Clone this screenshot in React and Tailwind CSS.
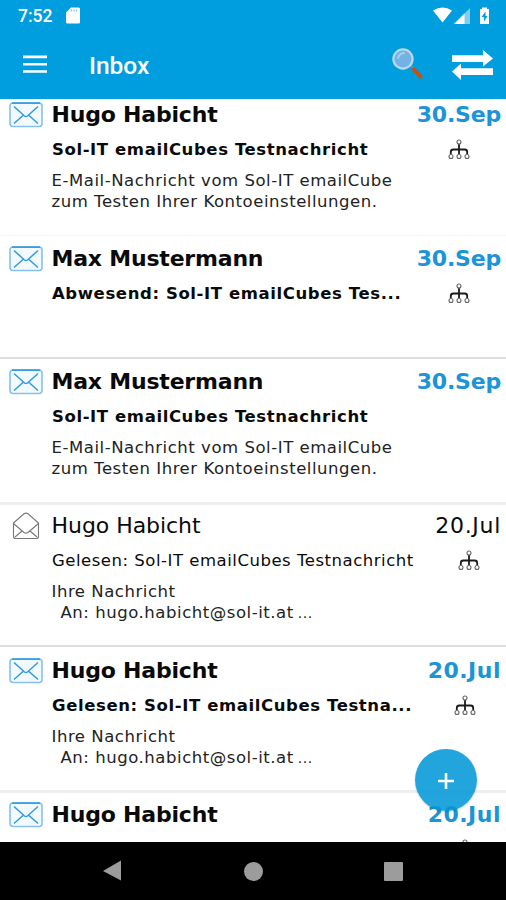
const body = ["E-Mail-Nachricht vom Sol-IT emailCube", "zum Testen Ihrer Kontoeinstellungen."];

const mails = [
  { from: "Hugo Habicht", date: "30.Sep", subject: "Sol-IT emailCubes Testnachricht", body, tree: true, unread: true, box: "h-[136px] pt-[2px]" },
  { from: "Max Mustermann", date: "30.Sep", subject: "Abwesend: Sol-IT emailCubes Tes...", tree: true, unread: true, box: "h-[122px] border-t border-[#f5f5f5] pt-[9px]" },
  { from: "Max Mustermann", date: "30.Sep", subject: "Sol-IT emailCubes Testnachricht", body, unread: true, box: "h-[145px] border-t-2 border-[#dedede] pt-[9px]" },
  { from: "Hugo Habicht", date: "20.Jul", subject: "Gelesen: Sol-IT emailCubes Testnachricht", reply: true, tree: true, july: true, box: "h-[143px] border-t-[3px] border-[#eeeeee] pt-[7px]" },
  { from: "Hugo Habicht", date: "20.Jul", subject: "Gelesen: Sol-IT emailCubes Testna...", reply: true, tree: true, unread: true, july: true, box: "h-[145px] border-t-2 border-[#dedede] pt-[10px]" },
  { from: "Hugo Habicht", date: "20.Jul", subject: "", tree: true, unread: true, july: true, box: "h-[145px] border-t-[3px] border-[#eeeeee] pt-[8px]" },
];

function Envelope({ unread }) {
  if (unread) {
    return (
      <svg className="mt-[1px] ml-[9px] h-[26px] w-[34px] shrink-0" viewBox="0 0 34 26" fill="none">
        <rect x="1" y="1" width="32" height="23.5" rx="3" fill="#f3faff" stroke="#86c0ef" strokeWidth="1.6" />
        <path d="M3 1.1h28" stroke="#2d9bdd" strokeWidth="1.6" />
        <path d="M5 4.5 15.5 14q1.5 1 3 0L29 4.5M5 21.5l9-8M29 21.5l-9-8" stroke="#2d9bdd" strokeWidth="1.5" />
      </svg>
    );
  }
  return (
    <svg className="ml-[9px] h-[28px] w-[34px] shrink-0" viewBox="0 0 34 28" fill="none" stroke="#777" strokeWidth="1.1">
      <path d="M4.5 11 15 1.8q2-1.3 4 0L29.5 11v13.5q0 2-2 2h-21q-2 0-2-2z" />
      <path d="M4.5 11.5 15 20.5q2 1.3 4 0l10.5-9M6 25l7-6M28 25l-7-6" />
    </svg>
  );
}

function Tree() {
  return (
    <svg className="mt-[10px] ml-[1px] h-[21px] w-[22px]" viewBox="0 0 22 21" fill="none">
      <path d="M11 5v10M2.8 15v-2q0-2.5 2.5-2.5h11.4q2.5 0 2.5 2.5v2" stroke="#1a1a1a" strokeWidth="1.8" />
      <g stroke="#666" strokeWidth="1.1">
        <circle cx="11" cy="3" r="2" />
        <circle cx="3" cy="17.5" r="2" />
        <circle cx="11" cy="17.5" r="2" />
        <circle cx="19" cy="17.5" r="2" />
      </g>
    </svg>
  );
}

function Mail({ mail }) {
  const { unread, july } = mail;
  return (
    <article className={"flex shrink-0 items-start pr-[5px] " + mail.box}>
      <Envelope unread={unread} />
      <div className="ml-[8px] min-w-0 flex-1 whitespace-nowrap">
        <h2 className={"ml-[0.5px] text-[22px] leading-[28px] " + (unread ? "font-bold tracking-[-0.2px]" : "font-normal tracking-[-0.05px]")}>{mail.from}</h2>
        <p className={"mt-[10px] ml-[1px] h-[22px] text-[16.5px] leading-[22px] " + (unread ? "font-bold tracking-[0.6px]" : "tracking-[0.52px]")}>{mail.subject}</p>
        <div className="mt-[9px] ml-[0.5px] text-[16.5px] leading-[21px] tracking-[0.54px] text-[#222]">
          {mail.body && mail.body.map((line) => <p key={line}>{line}</p>)}
          {mail.reply && (
            <>
              <p>Ihre Nachricht</p>
              <p className="pl-[9px]">An: hugo.habicht@sol-it.at<span className="ml-[4px] text-[14px]">...</span></p>
            </>
          )}
        </div>
      </div>
      <div className="flex flex-col items-center">
        <time className={"text-[22px] leading-[28px] " + (unread ? "font-bold text-[#1b94d8] " : "") + (july ? (unread ? "tracking-[0.5px]" : "tracking-[0.7px]") : "tracking-[-0.2px]")}>{mail.date}</time>
        {mail.tree && <Tree />}
      </div>
    </article>
  );
}

export default function App() {
  return (
    <div className="relative flex h-[900px] w-[506px] flex-col overflow-hidden bg-white font-['DejaVu_Sans',sans-serif] text-[#0a0a0a]">
      <header className="h-[99px] shrink-0 bg-[#009ddf] font-[Roboto,sans-serif] text-white">
        <div className="flex h-[32px] items-center pl-[18px] pr-[16px]">
          <span className="text-[17.5px] leading-[32px] font-medium">7:52</span>
          <svg className="mt-[-1px] ml-[14px] h-[17px] w-[14px]" viewBox="0 0 14 17">
            <path d="M5 .5h7.5q1.5 0 1.5 1.5v13q0 1.5-1.5 1.5h-11Q0 16.5 0 15V5.5z" fill="#fff" />
            <path d="M5.5 2.5v2M8 2.5v2M10.5 2.5v2" stroke="#7dc9ee" strokeWidth="1.2" />
          </svg>
          <div className="flex-1" />
          <svg className="h-[18px] w-[57px]" viewBox="0 0 57 18">
            <path d="M0 3.5Q9.5-2.5 19 3.5L9.5 15.5z" fill="#fff" />
            <path d="M37 1v16H21z" fill="#7fceef" />
            <path d="M31.5 6.5V17H21z" fill="#fff" />
            <path d="M47 2h2V.5h5V2h2v15h-9z" fill="#fff" />
            <path d="m52.5 4.5-4 5.5h2.500v4.500l3.500-5.500h-2z" fill="#009ddf" />
          </svg>
        </div>
        <div className="flex h-[66px] items-center pl-[23px] pr-[13px]">
          <svg className="mt-[-2px] h-[18px] w-[24px]" viewBox="0 0 24 18" stroke="#fff" strokeWidth="2.6">
            <path d="M0 1.9h24M0 9.2h24M0 16.5h24" />
          </svg>
          <h1 className="mt-[2px] ml-[42px] text-[24.5px] leading-[30px] font-medium">Inbox</h1>
          <div className="flex-1" />
          <svg className="mt-[-4px] h-[33px] w-[32px]" viewBox="0 0 32 33">
            <path d="m19 19 4 4" stroke="#718b9b" strokeWidth="2" />
            <path d="m22 22.5 6.5 7" stroke="#b9571b" strokeWidth="4.2" strokeLinecap="round" />
            <circle cx="11" cy="12" r="9.6" fill="#72b2e5" stroke="#b9d8ea" strokeWidth="2.2" />
            <path d="M6 11q1-4.5 6-5" stroke="#a4d0f2" strokeWidth="2" fill="none" strokeLinecap="round" />
          </svg>
          <svg className="mt-[-1px] ml-[28px] h-[30px] w-[41px]" viewBox="0 0 41 30" fill="#fff">
            <path d="M0 5.3h31V0l10 8.5-10 8v-4.500H0z" />
            <path d="M41 18.3H9V13.5L0 21.5l9 8.5v-5h32z" />
          </svg>
        </div>
      </header>
      <main className="flex min-h-0 flex-1 flex-col overflow-hidden">
        {mails.map((mail, i) => (
          <Mail key={i} mail={mail} />
        ))}
      </main>
      <nav className="flex h-[58px] shrink-0 items-center bg-black pl-[102px] pr-[102px]">
        <svg className="h-[22px] w-[20px]" viewBox="0 0 20 22">
          <path d="M19 .5v20L1 11z" fill="#9c9c9c" />
        </svg>
        <div className="ml-[122px] size-[19px] rounded-full bg-[#9c9c9c]" />
        <div className="ml-[121px] size-[19px] rounded-[1px] bg-[#9c9c9c]" />
      </nav>
      <button className="absolute top-[749px] left-[415px] flex size-[62px] items-center justify-center rounded-full bg-[rgba(0,152,215,0.87)] shadow-[0_1px_2px_rgba(0,0,0,0.18)]">
        <svg className="mt-[1px] size-[16px]" viewBox="0 0 16 16" stroke="#fff" strokeWidth="2.6">
          <path d="M8 0v16M0 8h16" />
        </svg>
      </button>
    </div>
  );
}
